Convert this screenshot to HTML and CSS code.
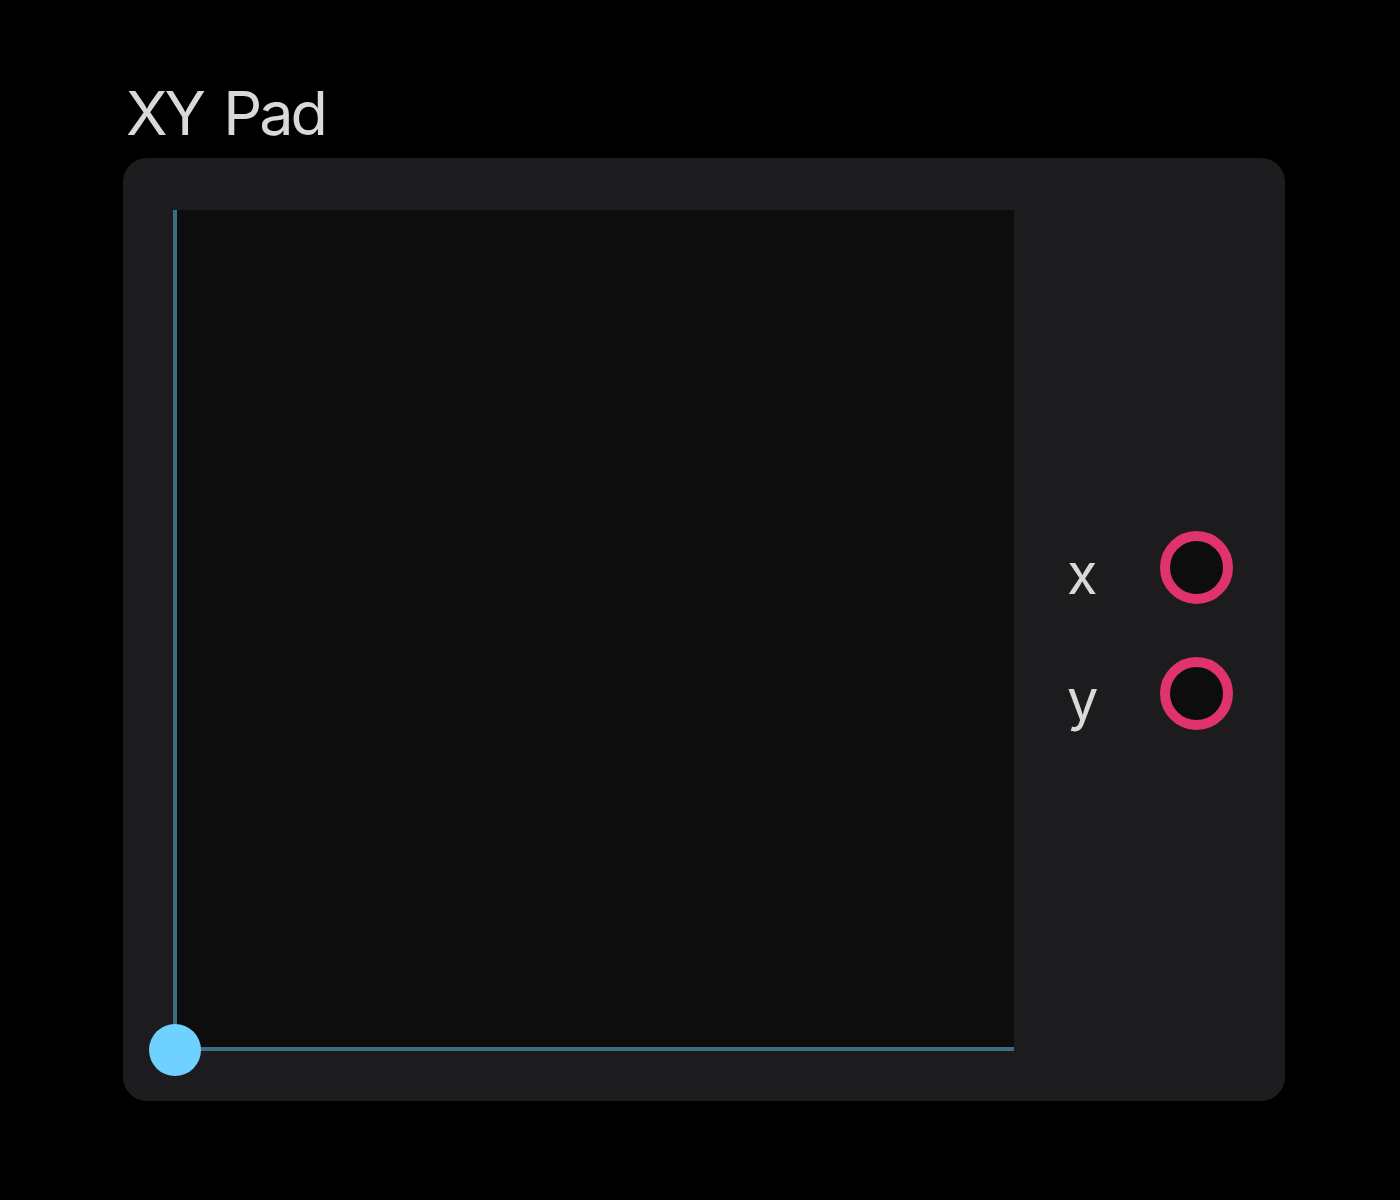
FILE: index.html
```html
<!DOCTYPE html>
<html>
<head>
<meta charset="utf-8">
<link rel="stylesheet" href="styles.css">
</head>
<body>
<div class="page">
  <h1 class="title">XY Pad</h1>
  <div class="card">
    <div class="pad">
      <div class="axis-y"></div>
      <div class="axis-x"></div>
      <div class="handle"></div>
    </div>
    <div class="outputs">
      <div class="out-row">
        <span class="out-label">x</span>
        <span class="port"></span>
      </div>
      <div class="out-row">
        <span class="out-label">y</span>
        <span class="port"></span>
      </div>
    </div>
  </div>
</div>
</body>
</html>
```
FILE: styles.css
```css
html, body {
  margin: 0;
  background: #000;
}
body {
  font-family: Inter, "Noto Sans", sans-serif;
  color: #d9d9d9;
}
.page {
  padding: 82px 0 0 123px;
  display: flex;
  flex-direction: column;
  align-items: flex-start;
}
.title {
  margin: 0 0 0 3px;
  font-weight: 400;
  font-size: 61px;
  line-height: 62px;
  height: 76px;
  letter-spacing: -3px;
  word-spacing: 6px;
}
.card {
  box-sizing: border-box;
  width: 1162px;
  height: 943px;
  background: #1c1c1e;
  border-radius: 24px;
  padding: 52px 52px 50px 50px;
  display: flex;
  align-items: stretch;
}
.pad {
  position: relative;
  width: 841px;
  height: 841px;
  flex: none;
  background: #0d0d0d;
}
.axis-y {
  position: absolute;
  left: 0;
  top: 0;
  bottom: 0;
  width: 4px;
  background: #3d6e80;
}
.axis-x {
  position: absolute;
  left: 0;
  right: 0;
  bottom: 0;
  height: 4px;
  background: #3d6e80;
}
.handle {
  position: absolute;
  left: -24px;
  bottom: -25px;
  width: 52px;
  height: 52px;
  border-radius: 50%;
  background: #6fd1ff;
}
.outputs {
  flex: 1;
  display: flex;
  flex-direction: column;
  justify-content: center;
  gap: 53px;
  padding-left: 53px;
}
.out-row {
  display: flex;
  align-items: center;
  justify-content: space-between;
  height: 73px;
}
.out-label {
  font-size: 56px;
  font-weight: 400;
  line-height: 1;
  color: #d9d9d9;
  position: relative;
  top: 6px;
}
.port {
  box-sizing: border-box;
  width: 73px;
  height: 73px;
  border-radius: 50%;
  border: 10px solid #e0336b;
  background: #0d0d0d;
}
```
